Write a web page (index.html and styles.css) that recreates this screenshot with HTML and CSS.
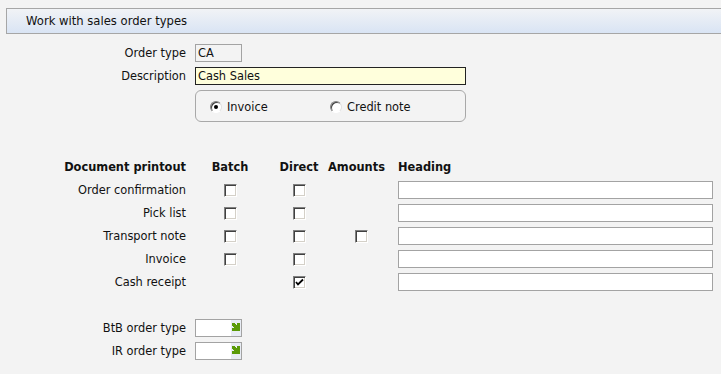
FILE: index.html
```html
<!DOCTYPE html>
<html lang="en">
<head>
    <meta charset="UTF-8">
    <title>Work with sales order types</title>
    <link rel="stylesheet" href="styles.css">
</head>
<body>
    <div class="title-bar">Work with sales order types</div>

    <div class="form">
        <label class="field-label">Order type</label>
        <div class="field short">CA</div>

        <label class="field-label">Description</label>
        <div class="field long edit">Cash Sales</div>

        <span></span>
        <div class="radio-box">
            <span class="radio-item"><span class="radio checked"></span>Invoice</span>
            <span class="radio-item"><span class="radio"></span>Credit note</span>
        </div>
    </div>

    <div class="print-table">
        <div class="th label">Document printout</div>
        <div class="th center">Batch</div>
        <div class="th center">Direct</div>
        <div class="th amounts">Amounts</div>
        <div class="th">Heading</div>

        <div class="label">Order confirmation</div>
        <div class="cell"><span class="check"></span></div>
        <div class="cell"><span class="check"></span></div>
        <div class="cell"></div>
        <div class="field heading"></div>

        <div class="label">Pick list</div>
        <div class="cell"><span class="check"></span></div>
        <div class="cell"><span class="check"></span></div>
        <div class="cell"></div>
        <div class="field heading"></div>

        <div class="label">Transport note</div>
        <div class="cell"><span class="check"></span></div>
        <div class="cell"><span class="check"></span></div>
        <div class="cell"><span class="check"></span></div>
        <div class="field heading"></div>

        <div class="label">Invoice</div>
        <div class="cell"><span class="check"></span></div>
        <div class="cell"><span class="check"></span></div>
        <div class="cell"></div>
        <div class="field heading"></div>

        <div class="label">Cash receipt</div>
        <div class="cell"></div>
        <div class="cell">
            <span class="check">
                <svg width="9" height="9" viewBox="0 0 9 9"><path d="M1 4 L3 6.5 L8 1.5" fill="none" stroke="#000" stroke-width="1.8"/></svg>
            </span>
        </div>
        <div class="cell"></div>
        <div class="field heading"></div>
    </div>

    <div class="form bottom">
        <label class="field-label">BtB order type</label>
        <div class="field lookup">
            <span class="lookup-btn">
                <svg width="8" height="8" viewBox="0 0 8 8" shape-rendering="crispEdges"><path d="M0 0 H3 V1 H4 V2 H5 V0 H8 V8 H0 V5 H2 V4 H1 V3 H0 Z" fill="#5a9a08"/></svg>
            </span>
        </div>

        <label class="field-label">IR order type</label>
        <div class="field lookup">
            <span class="lookup-btn">
                <svg width="8" height="8" viewBox="0 0 8 8" shape-rendering="crispEdges"><path d="M0 0 H3 V1 H4 V2 H5 V0 H8 V8 H0 V5 H2 V4 H1 V3 H0 Z" fill="#5a9a08"/></svg>
            </span>
        </div>
    </div>
</body>
</html>
```

FILE: styles.css
```css
body {
    margin: 0;
    background-color: #f3f3f3;
    color: #111;
    font-family: 'DejaVu Sans', Verdana, sans-serif;
    font-size: 11.4px;
    overflow: hidden;
}
.title-bar {
    margin: 8px 0 0 6px;
    height: 24px;
    line-height: 24px;
    padding-left: 19px;
    border: 1px solid #a6a6a6;
    border-right: none;
    background: linear-gradient(to bottom, #f1f3f6, #d9e4f4);
    font-size: 11.6px;
}
.form {
    display: grid;
    grid-template-columns: 186px max-content;
    column-gap: 9px;
    row-gap: 5px;
    margin-top: 10px;
}
.form.bottom {
    margin-top: 28px;
}
.field-label, .label {
    text-align: right;
    align-self: center;
    white-space: nowrap;
}
.field {
    box-sizing: border-box;
    height: 18px;
    line-height: 16px;
    padding: 0 2px;
    border: 1px solid #a3a3a3;
    background-color: #fff;
}
.field.short {
    width: 47px;
    background-color: #f3f3f3;
}
.field.long {
    width: 271px;
}
.field.edit {
    border-color: #222;
    background-color: #ffffdc;
}
.radio-box {
    box-sizing: border-box;
    width: 271px;
    height: 32px;
    border: 1px solid #a8a8a8;
    border-radius: 6px;
    display: flex;
    align-items: center;
    padding-left: 14px;
    padding-top: 1px;
}
.radio-item {
    display: flex;
    align-items: center;
    gap: 5px;
    width: 120px;
}
.radio {
    box-sizing: border-box;
    width: 12px;
    height: 12px;
    border-radius: 50%;
    border: 1px solid;
    border-color: #808080 #e0e0e0 #ffffff #808080;
    box-shadow: inset 1px 1px #404040;
    background-color: #fff;
    position: relative;
}
.radio.checked::after {
    content: '';
    position: absolute;
    left: 3px;
    top: 3px;
    width: 4px;
    height: 4px;
    border-radius: 50%;
    background-color: #000;
}
.print-table {
    display: grid;
    grid-template-columns: 186px 88px 50px 74px 315px;
    grid-auto-rows: 18px;
    row-gap: 5px;
    margin-top: 36px;
}
.th {
    font-weight: bold;
    align-self: center;
    white-space: nowrap;
}
.th.center {
    text-align: center;
}
.th.amounts {
    padding-left: 4px;
}
.cell {
    display: flex;
    align-items: center;
    justify-content: center;
}
.check {
    box-sizing: border-box;
    width: 13px;
    height: 13px;
    border: 1px solid;
    border-color: #808080 #ffffff #ffffff #808080;
    box-shadow: inset 1px 1px #404040, inset -1px -1px #d4d0c8;
    background-color: #fff;
    display: flex;
    align-items: center;
    justify-content: center;
}
.field.heading {
    width: 315px;
}
.field.lookup {
    width: 47px;
    display: flex;
    justify-content: flex-end;
    padding: 0;
}
.lookup-btn {
    width: 10px;
    height: 100%;
    background-color: #e8ecf4;
    display: flex;
    justify-content: center;
    padding-top: 3px;
    box-sizing: border-box;
}
```
